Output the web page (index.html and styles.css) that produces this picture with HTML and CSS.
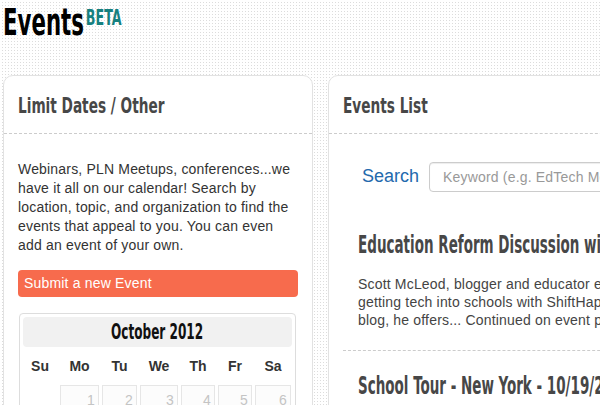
FILE: index.html
```html
<!DOCTYPE html>
<html lang="en">
<head>
<meta charset="utf-8">
<title>Events BETA</title>
<link rel="stylesheet" href="styles.css">
</head>
<body>
<div class="page">
  <h1 class="brand"><span class="brand-text">Events<sup class="beta">BETA</sup></span></h1>
  <div class="columns">
    <aside class="card card-side">
      <div class="card-head">
        <h2 class="card-title"><span class="cond">Limit Dates / Other</span></h2>
      </div>
      <div class="card-body">
        <p class="intro">Webinars, PLN Meetups, conferences...we have it all on our calendar! Search by location, topic, and organization to find the events that appeal to you. You can even add an event of your own.</p>
        <a class="btn-submit" href="#">Submit a new Event</a>
        <div class="calendar">
          <div class="cal-head"><span class="cal-month">October 2012</span></div>
          <div class="cal-grid">
            <div class="dow">Su</div><div class="dow">Mo</div><div class="dow">Tu</div><div class="dow">We</div><div class="dow">Th</div><div class="dow">Fr</div><div class="dow">Sa</div>
            <div class="day empty"></div><div class="day">1</div><div class="day">2</div><div class="day">3</div><div class="day">4</div><div class="day">5</div><div class="day">6</div>
            <div class="day">7</div><div class="day">8</div><div class="day">9</div><div class="day">10</div><div class="day">11</div><div class="day">12</div><div class="day">13</div>
          </div>
        </div>
      </div>
    </aside>
    <main class="card card-main">
      <div class="card-head">
        <h2 class="card-title"><span class="cond">Events List</span></h2>
      </div>
      <div class="card-body">
        <form class="search">
          <label class="search-label" for="kw">Search</label>
          <input class="search-input" id="kw" type="text" placeholder="Keyword (e.g. EdTech Meetup, Location or Organization)">
        </form>
        <div class="events">
          <article class="event">
            <h3 class="event-title"><span class="cond-title">Education Reform Discussion with Scott McLeod - 10/18/2012</span></h3>
            <p class="event-desc">Scott McLeod, blogger and educator extraordinaire, talks about the challenges of<br>getting tech into schools with ShiftHappens. On his Dangerously Irrelevant<br>blog, he offers... Continued on event page</p>
          </article>
          <article class="event">
            <h3 class="event-title"><span class="cond-title">School Tour - New York - 10/19/2012</span></h3>
            <p class="event-desc">Visit innovative schools in New York City and meet the teachers and students<br>who are changing how classrooms work... Continued on event page</p>
          </article>
        </div>
      </div>
    </main>
  </div>
</div>
</body>
</html>
```
FILE: styles.css
```css
html, body {
  margin: 0;
  height: 100%;
  overflow: hidden;
}

body {
  font-family: "Liberation Sans", Arial, sans-serif;
  font-size: 14px;
  letter-spacing: 0.18px;
  color: #333;
  background-color: #dcdcdc;
  background-image:
    linear-gradient(90deg, #fff 2px, transparent 2px),
    linear-gradient(#fff 2px, transparent 2px);
  background-size: 3px 3px;
}

.page {
  width: 960px;
  padding: 3px 3px 0;
}

.brand {
  margin: 0;
  font-family: "DejaVu Sans Condensed", "Liberation Sans", sans-serif;
  font-weight: 700;
  font-size: 37px;
  line-height: 40px;
  letter-spacing: 0;
  color: #000;
}

.brand-text {
  display: inline-block;
  transform: scaleX(0.64);
  transform-origin: left center;
}

.beta {
  font-size: 22px;
  line-height: 1;
  color: #16807f;
  vertical-align: 10px;
  margin-left: 3px;
}

.columns {
  display: flex;
  align-items: flex-start;
  gap: 15px;
  margin-top: 32px;
}

.card {
  background: #fff;
  border: 1px solid #e2e2e2;
  border-radius: 10px;
  flex: none;
}

.card-side { width: 308px; }
.card-main { width: 620px; }

.card-head {
  padding: 15px 14px 12px;
  border-bottom: 1px dashed #ccc;
}

.card-title {
  margin: 0;
  font-family: "DejaVu Sans Condensed", "Liberation Sans", sans-serif;
  font-weight: 700;
  font-size: 22px;
  line-height: 30px;
  letter-spacing: 0;
  color: #474747;
}

.cond {
  display: inline-block;
  transform: scaleX(0.69);
  transform-origin: left center;
}

.card-body {
  padding: 26px 14px 0;
}

.intro {
  margin: 0;
  line-height: 19px;
}

.btn-submit {
  display: block;
  margin-top: 15px;
  padding: 4px 6px;
  line-height: 19px;
  background: #f76b4d;
  color: #fff;
  border-radius: 4px;
  text-decoration: none;
}

.calendar {
  margin: 16px 2px 0 1px;
  padding: 3px;
  border: 1px solid #ddd;
  border-radius: 4px;
}

.cal-head {
  height: 30px;
  background: #f1f1f1;
  border-radius: 4px;
  text-align: center;
  font-family: "DejaVu Sans Condensed", "Liberation Sans", sans-serif;
  font-weight: 700;
  font-size: 21px;
  line-height: 30px;
  letter-spacing: 0;
  color: #111;
}

.cal-month {
  display: inline-block;
  transform: scaleX(0.64);
  transform-origin: center center;
}

.cal-grid {
  display: grid;
  grid-template-columns: 34px 39px 35px 38px 34px 34px 36px;
  gap: 3px;
}

.dow {
  padding: 9px 0 6px;
  line-height: 20px;
  text-align: center;
  font-weight: 700;
  letter-spacing: 0;
  color: #333;
}

.day {
  height: 40px;
  padding: 5px 3px 0 0;
  border: 1px solid #e6e6e6;
  background: #fcfcfc;
  text-align: right;
  line-height: 19px;
  color: #c4c4c4;
}

.day.empty {
  border-color: transparent;
  background: transparent;
}

.search {
  display: flex;
  align-items: center;
  gap: 10px;
  margin: 2px 0 0;
  padding-left: 19px;
}

.search-label {
  font-size: 18px;
  line-height: 20px;
  letter-spacing: 0;
  color: #2369ad;
  margin-bottom: 3px;
}

.search-input {
  width: 320px;
  height: 30px;
  box-sizing: border-box;
  padding: 0 13px;
  border: 1px solid #ccc;
  border-radius: 4px;
  box-shadow: inset 0 1px 1px rgba(0, 0, 0, 0.075);
  font-family: "Liberation Sans", Arial, sans-serif;
  font-size: 14px;
  letter-spacing: 0.18px;
  color: #555;
}

.search-input::placeholder {
  color: #999;
}

.events {
  margin-top: 18px;
  margin-left: -14px;
  margin-right: -14px;
  padding-left: 14px;
}

.event {
  padding: 20px 15px 21px;
  border-bottom: 1px dashed #ccc;
}

.event-title {
  margin: 0;
  font-family: "DejaVu Sans Condensed", "Liberation Sans", sans-serif;
  font-weight: 700;
  font-size: 25px;
  line-height: 30px;
  letter-spacing: 0;
  color: #474747;
  white-space: nowrap;
}

.cond-title {
  display: inline-block;
  transform: scaleX(0.6);
  transform-origin: left center;
}

.event-desc {
  margin: 15px 0 0;
  line-height: 18px;
  color: #444;
  white-space: nowrap;
}
```
